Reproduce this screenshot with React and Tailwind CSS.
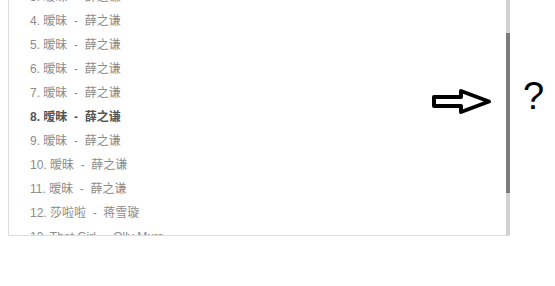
import React from "react";

const songs = [
    { n: 3, title: "暧昧", artist: "薛之谦" },
    { n: 4, title: "暧昧", artist: "薛之谦" },
    { n: 5, title: "暧昧", artist: "薛之谦" },
    { n: 6, title: "暧昧", artist: "薛之谦" },
    { n: 7, title: "暧昧", artist: "薛之谦" },
    { n: 8, title: "暧昧", artist: "薛之谦", active: true },
    { n: 9, title: "暧昧", artist: "薛之谦" },
    { n: 10, title: "暧昧", artist: "薛之谦" },
    { n: 11, title: "暧昧", artist: "薛之谦" },
    { n: 12, title: "莎啦啦", artist: "蒋雪璇" },
    { n: 13, title: "That Girl", artist: "Olly Murs" },
];

export default function App() {
    return (
        <div
            className="w-[555px] h-[286px] bg-white flex items-start overflow-hidden"
            style={{ fontFamily: '"Liberation Sans", "Noto Sans CJK SC", sans-serif' }}
        >
            {/* Lista de músicas */}
            <div className="relative ml-2 w-[502px] h-[236px] flex border-l border-b border-[#dcdcdc] overflow-hidden">
                <div className="flex-1 overflow-hidden">
                    <ul className="mt-[-15px] pl-[21px]">
                        {songs.map((s) => (
                            <li
                                key={s.n}
                                className={`h-6 leading-6 text-[12px] whitespace-pre ${
                                    s.active ? "font-bold text-[#555]" : "text-[#8c8c8c]"
                                }`}
                            >
                                {`${s.n}. ${s.title}  -  ${s.artist}`}
                            </li>
                        ))}
                    </ul>
                </div>

                {/* Barra de rolagem */}
                <div className="w-[4px] h-full bg-[#d2d2d2] flex flex-col">
                    <div className="h-[33px]" />
                    <div className="h-[160px] bg-[#7b7b7b]" />
                </div>

                {/* Seta */}
                <svg
                    className="absolute left-[422px] top-[88px]"
                    width="62"
                    height="28"
                    viewBox="0 0 62 28"
                >
                    <path
                        d="M3 9 L30 9 L30 3 L58 13.5 L30 24 L30 18 L3 18 Z"
                        fill="white"
                        stroke="black"
                        strokeWidth="4"
                        strokeLinejoin="round"
                    />
                </svg>
            </div>

            <div className="ml-[13px] mt-[72px] text-[38px] leading-[48px] font-medium text-black">?</div>
        </div>
    );
}
